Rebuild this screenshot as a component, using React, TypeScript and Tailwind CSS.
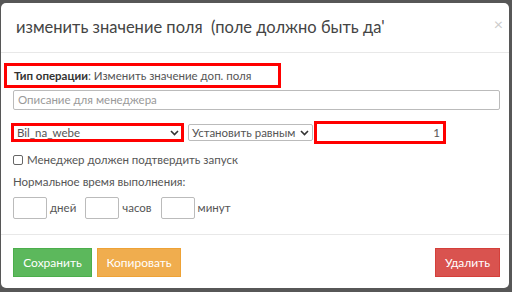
import React from 'react';

const font = { fontFamily: 'Lato, "Open Sans", sans-serif' };

const Chevron: React.FC = () => (
  <svg width="9" height="6" viewBox="0 0 9 6" className="shrink-0">
    <path d="M1 1l3.5 3.5L8 1" fill="none" stroke="#333" strokeWidth="1.6" />
  </svg>
);

const TimeInput: React.FC<{ label: string }> = ({ label }) => (
  <div className="flex items-center">
    <div className="w-[34px] h-[22px] border border-[#bbb] rounded-[2px] bg-white" />
    <span className="ml-[3px] text-[#555]">{label}</span>
  </div>
);

const App: React.FC = () => {
  return (
    <div
      className="w-[512px] h-[292px] bg-[#575757] pt-[3px] pl-[1px] overflow-hidden text-[11.5px] text-[#555] whitespace-nowrap"
      style={font}
    >
      <div className="w-[508px] h-[285px] bg-white rounded-[5px] flex flex-col">
        {/* ヘッダー */}
        <div className="h-[50px] shrink-0 flex items-center justify-between pl-[15px] pr-[6px] border-b border-[#e8e8e8]">
          <span className="text-[16.5px] text-[#444] whitespace-pre overflow-hidden">изменить значение поля  (поле должно быть да'</span>
          <span className="text-[16px] text-[#ccc] leading-none -mt-[8px]">×</span>
        </div>

        {/* 本体 */}
        <div className="flex-1 px-[12px] pt-[10px]">
          <div className="-ml-[9px] w-[277px] h-[25px] border-[3px] border-[#f00] flex items-center pl-[7px]">
            <span className="font-bold text-[#333]">Тип операции</span>
            <span className="text-[#555]">: Изменить значение доп. поля</span>
          </div>
          <div className="mt-[2px] w-[487px] h-[20px] border border-[#bbb] rounded-[2px] flex items-center px-[4px] text-[#999]">
            Описание для менеджера
          </div>

          <div className="mt-[11px] flex items-center">
            <div className="-ml-[2px] w-[173px] h-[19px] border-[3px] border-[#f00] flex items-center justify-between pl-[3px] pr-[2px]">
              <span className="text-[#555]">Bil_na_webe</span>
              <Chevron />
            </div>
            <div className="ml-[4px] w-[125px] h-[17px] border border-[#bbb] rounded-[2px] flex items-center justify-between pl-[3px] pr-[3px]">
              <span className="text-[#555]">Установить равным</span>
              <Chevron />
            </div>
            <div className="ml-[1px] w-[132px] h-[23px] border-[3px] border-[#f00] flex items-center justify-end pr-[3px]">
              <span className="text-[#555]">1</span>
            </div>
          </div>

          <label className="mt-[7px] flex items-center gap-[4px]">
            <span className="w-[10px] h-[10px] border border-[#666] rounded-[2px] bg-white" />
            <span>Менеджер должен подтвердить запуск</span>
          </label>
          <div className="mt-[5px]">Нормальное время выполнения:</div>
          <div className="mt-[6px] flex items-center gap-[9px]">
            <TimeInput label="дней" />
            <TimeInput label="часов" />
            <TimeInput label="минут" />
          </div>
        </div>

        {/* フッター */}
        <div className="h-[54px] shrink-0 border-t border-[#e8e8e8] flex items-center justify-between px-[12px] pt-[2px]">
          <div className="flex gap-[5px]">
            <button className="w-[79px] h-[29px] bg-[#5cb85c] border border-[#4cae4c] text-white text-[12px]">Сохранить</button>
            <button className="w-[84px] h-[29px] bg-[#f0ad4e] border border-[#eea236] text-white text-[12px]">Копировать</button>
          </div>
          <button className="w-[65px] h-[29px] bg-[#d9534f] border border-[#d43f3a] text-white text-[12px] mr-[-3px]">Удалить</button>
        </div>
      </div>
    </div>
  );
};

export default App;
